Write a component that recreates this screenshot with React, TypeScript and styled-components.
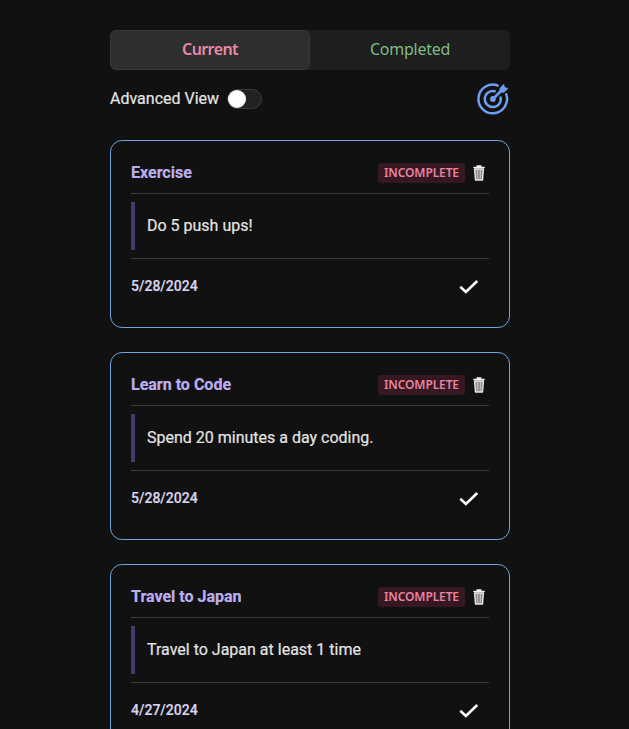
import React, { useState } from "react";
import styled, { createGlobalStyle } from "styled-components";

const GlobalStyle = createGlobalStyle`
  * { box-sizing: border-box; }
  html, body { height: 100%; overflow: hidden; }
  body {
    margin: 0;
    background: #111111;
    color: #e4e4e4;
    font-family: Roboto, sans-serif;
    font-size: 16px;
    -webkit-text-stroke: 0.2px currentColor;
  }
`;

const Page = styled.main`
  width: 400px;
  margin-left: 110px;
  padding-top: 30px;
`;

const Tabs = styled.div`
  display: flex;
  height: 40px;
  border-radius: 6px;
  background: #1e1e1e;
`;

const Tab = styled.button<{ $active: boolean; $color: string }>`
  flex: 1;
  border: 1px solid ${(p) => (p.$active ? "#383838" : "transparent")};
  border-radius: 6px;
  padding: 0 0 2px;
  background: ${(p) => (p.$active ? "#2e2e2e" : "transparent")};
  color: ${(p) => p.$color};
  font: ${(p) => (p.$active ? 600 : 400)} 16px "Noto Sans", sans-serif;
  letter-spacing: ${(p) => (p.$active ? "-0.6px" : "-0.25px")};
  -webkit-text-stroke: 0;
`;

const Toolbar = styled.div`
  display: flex;
  align-items: center;
  height: 58px;
  color: #6e9eee;
`;

const ToggleLabel = styled.span`
  margin-right: 8px;
  padding-bottom: 2px;
  color: #e4e4e4;
`;

const Switch = styled.button<{ $on: boolean }>`
  display: flex;
  justify-content: ${(p) => (p.$on ? "flex-end" : "flex-start")};
  align-items: center;
  width: 35px;
  height: 20px;
  margin-right: auto;
  padding: 0;
  border: 1px solid #3a3a3a;
  border-radius: 10px;
  background: #222222;
`;

const Thumb = styled.span`
  width: 18px;
  height: 18px;
  border-radius: 50%;
  background: #ffffff;
`;

const List = styled.div`
  display: flex;
  flex-direction: column;
  gap: 24px;
  padding-top: 12px;
`;

const Card = styled.article`
  height: 188px;
  padding: 20px;
  border: 1px solid #70a1e0;
  border-radius: 12px;
`;

const CardHeader = styled.header`
  display: flex;
  align-items: center;
  height: 33px;
  padding: 0 4px 9px 0;
  border-bottom: 1px solid #3b3b3b;
`;

const Title = styled.h2`
  flex: 1;
  margin: 0;
  color: #bcaeee;
  font-size: 16px;
  font-weight: 700;
`;

const Badge = styled.span`
  width: 87px;
  height: 20px;
  margin-right: 8px;
  border-radius: 3px;
  background: #361822;
  color: #e8839f;
  font: 600 12px/19px "Noto Sans", sans-serif;
  letter-spacing: -0.12px;
  text-align: center;
  -webkit-text-stroke: 0;
`;

const Quote = styled.blockquote`
  display: flex;
  align-items: center;
  height: 48px;
  margin: 8px 0;
  padding: 0 0 2px 12px;
  border-left: 4px solid #443b70;
`;

const CardFooter = styled.footer`
  display: flex;
  align-items: center;
  justify-content: space-between;
  height: 57px;
  padding-right: 10px;
  border-top: 1px solid #3b3b3b;
  color: #ffffff;
`;

const DateText = styled.time`
  padding-bottom: 2px;
  color: #d9d3ee;
  font-size: 14px;
  font-weight: 500;
`;

const TrashIcon = () => (
  <svg width="12" height="16" viewBox="0 0 12 16" fill="none">
    <path d="M1.6 4h8.8l-.9 11H2.5z" fill="#909090" stroke="#e8e8e8" strokeWidth="1.4" strokeLinejoin="round" />
    <path d="M.8 2.5h10.4M4 1h4" stroke="#f0f0f0" strokeWidth="1.3" strokeLinecap="round" />
    <path d="M4.6 5v8.5M7.4 5v8.5" stroke="#c4c4c4" strokeWidth="1" />
  </svg>
);

const CheckIcon = () => (
  <svg width="20" height="18" viewBox="0 0 20 18" fill="none">
    <path d="M2.3 9.6 6.9 14 17.3 3.9" stroke="currentColor" strokeWidth="2.6" strokeLinecap="square" />
  </svg>
);

const GoalIcon = () => (
  <svg width="34" height="34" viewBox="0 0 34 34" fill="none" stroke="currentColor" strokeWidth="2.5" strokeLinecap="round">
    <path d="M21.6 3.5A14.3 14.3 0 1 0 30.3 12.3" />
    <path d="M18.7 9.3A8 8 0 1 0 24.6 15.4" />
    <path d="M17 17 27 7" />
    <circle cx="16.9" cy="17" r="2.9" fill="currentColor" stroke="none" />
    <path d="M24 6.3 27.6 2.4 28.7 5.4 32 6.5 28 10.2H24z" fill="currentColor" strokeWidth=".7" strokeLinejoin="round" />
  </svg>
);

const goals = [
  { title: "Exercise", text: "Do 5 push ups!", date: "5/28/2024" },
  { title: "Learn to Code", text: "Spend 20 minutes a day coding.", date: "5/28/2024" },
  { title: "Travel to Japan", text: "Travel to Japan at least 1 time", date: "4/27/2024" },
];

export default function App() {
  const [advanced, setAdvanced] = useState(false);
  return (
    <>
      <GlobalStyle />
      <Page>
        <Tabs>
          <Tab $active $color="#e88aa6">Current</Tab>
          <Tab $active={false} $color="#7dbb84">Completed</Tab>
        </Tabs>
        <Toolbar>
          <ToggleLabel>Advanced View</ToggleLabel>
          <Switch $on={advanced} onClick={() => setAdvanced(!advanced)} aria-label="Advanced View">
            <Thumb />
          </Switch>
          <GoalIcon />
        </Toolbar>
        <List>
          {goals.map((goal) => (
            <Card key={goal.title}>
              <CardHeader>
                <Title>{goal.title}</Title>
                <Badge>INCOMPLETE</Badge>
                <TrashIcon />
              </CardHeader>
              <Quote>{goal.text}</Quote>
              <CardFooter>
                <DateText>{goal.date}</DateText>
                <CheckIcon />
              </CardFooter>
            </Card>
          ))}
        </List>
      </Page>
    </>
  );
}
